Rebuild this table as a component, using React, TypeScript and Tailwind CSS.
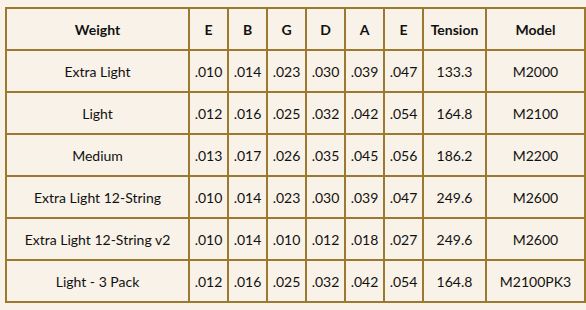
import React from "react";

const headers = ["Weight", "E", "B", "G", "D", "A", "E", "Tension", "Model"];

const rows: string[][] = [
  ["Extra Light", ".010", ".014", ".023", ".030", ".039", ".047", "133.3", "M2000"],
  ["Light", ".012", ".016", ".025", ".032", ".042", ".054", "164.8", "M2100"],
  ["Medium", ".013", ".017", ".026", ".035", ".045", ".056", "186.2", "M2200"],
  ["Extra Light 12-String", ".010", ".014", ".023", ".030", ".039", ".047", "249.6", "M2600"],
  ["Extra Light 12-String v2", ".010", ".014", ".010", ".012", ".018", ".027", "249.6", "M2600"],
  ["Light - 3 Pack", ".012", ".016", ".025", ".032", ".042", ".054", "164.8", "M2100PK3"],
];

function App() {
  return (
    <div className="w-[586px] h-[310px] bg-[#f9f2e8] pt-[7px] pl-[5px] font-['Lato',sans-serif] text-[14px] text-[#111]">
      <div className="w-[581px] grid grid-cols-[181px_37px_37px_37px_37px_37px_37px_61px_97px] auto-rows-[40px] gap-[2px] p-[2px] bg-[#9b7a30]">
        {headers.map((h, i) => (
          <div key={"h" + i} className="bg-[#f9f2e8] flex items-center justify-center font-bold">
            {h}
          </div>
        ))}
        {rows.map((row, r) =>
          row.map((cell, c) => (
            <div key={r + "-" + c} className="bg-[#f9f2e8] flex items-center justify-center whitespace-nowrap">
              {cell}
            </div>
          ))
        )}
      </div>
    </div>
  );
}

export default App;
